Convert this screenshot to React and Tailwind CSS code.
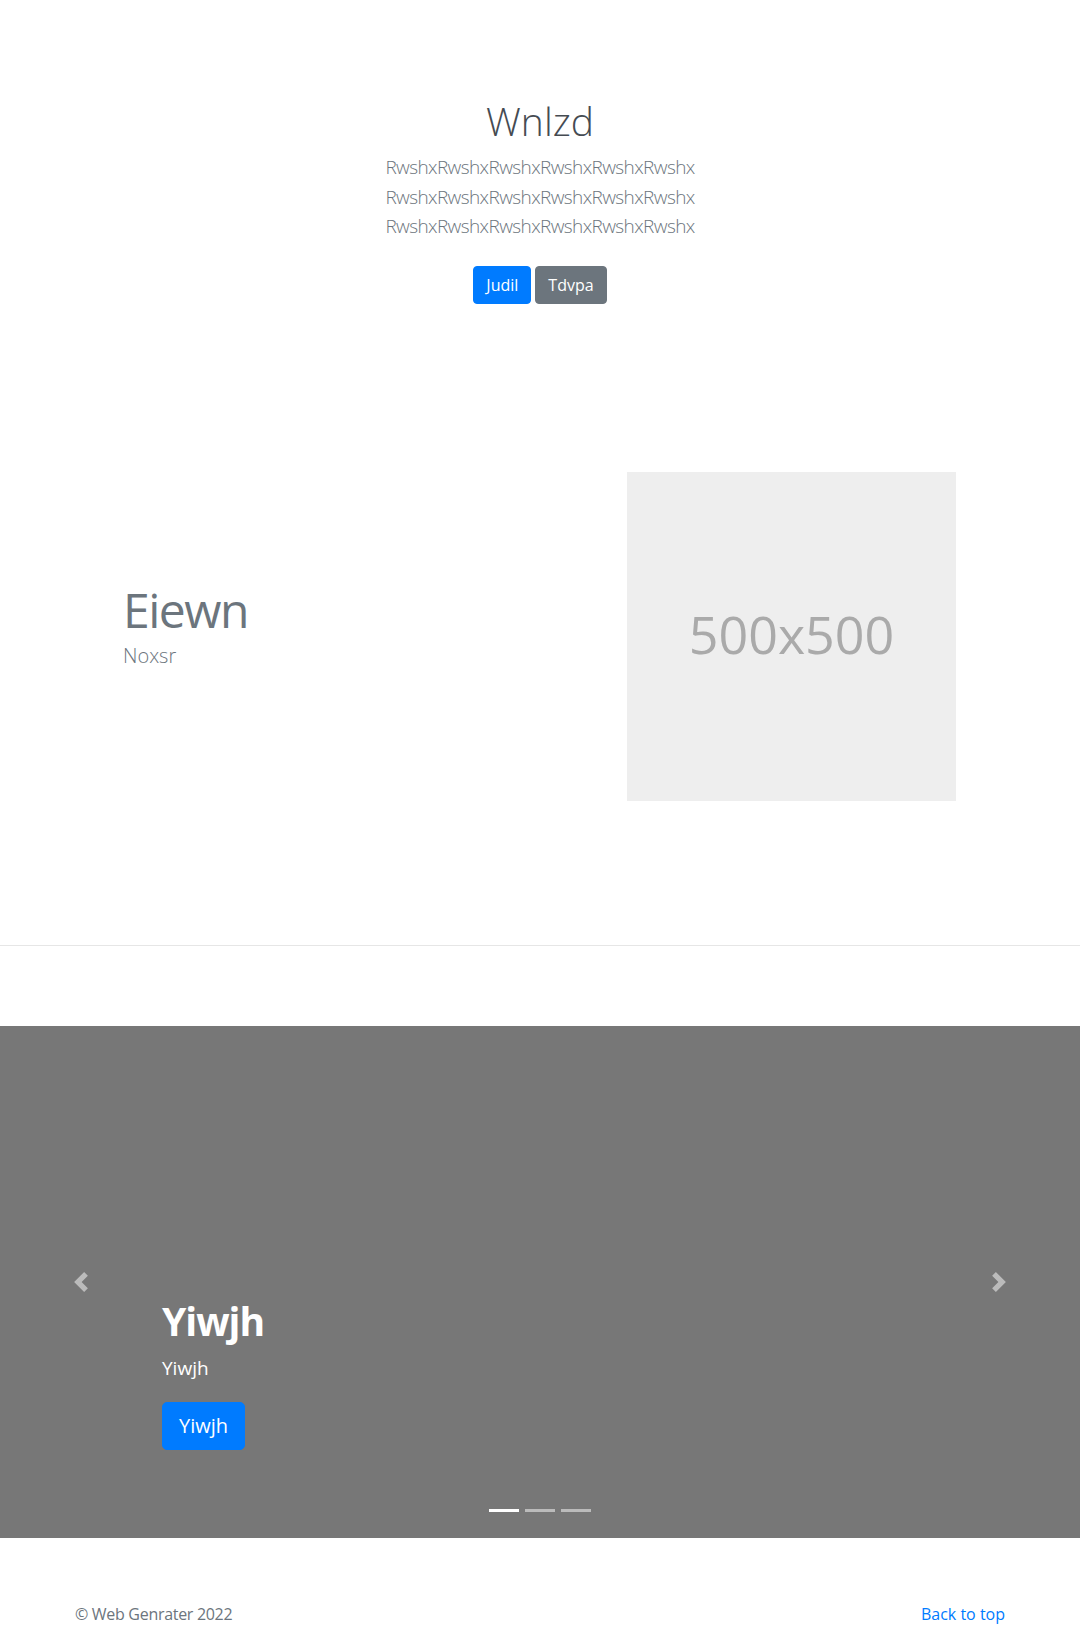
import React from 'react';

const font = "font-['Open_Sans','Noto_Sans',sans-serif]";

const Hero = () => (
    <section className="text-center pt-[97px]">
        <h1 className="text-[39px] leading-[48px] font-light text-[#454b52] mb-[8px]">Wnlzd</h1>
        <p className="text-[19px] leading-[29.5px] font-light tracking-[-0.6px] text-[#6c757d] mb-[24.5px]">
            RwshxRwshxRwshxRwshxRwshxRwshx
            <br />
            RwshxRwshxRwshxRwshxRwshxRwshx
            <br />
            RwshxRwshxRwshxRwshxRwshxRwshx
        </p>
        <div className="flex justify-center gap-[4px]">
            <a href="#" className="inline-block h-[38px] px-3 leading-[36px] text-[16px] text-white bg-[#007bff] border border-[#007bff] rounded-[4px]">
                Judil
            </a>
            <a href="#" className="inline-block h-[38px] px-3 leading-[36px] text-[16px] text-white bg-[#6c757d] border border-[#6c757d] rounded-[4px]">
                Tdvpa
            </a>
        </div>
    </section>
);

const Feature = () => (
    <section className="w-[960px] mx-auto px-[15px] pt-[168px] pb-[144px] flex">
        {/* Text Column */}
        <div className="w-[552px] pt-[107px] pl-[48px]">
            <h2 className="text-[48px] leading-[62px] font-normal tracking-[-1.5px] text-[#6c757d]">Eiewn</h2>
            <p className="text-[20px] leading-[30px] font-light text-[#6c757d]">Noxsr</p>
        </div>

        {/* Placeholder Image */}
        <div className="w-[329px] h-[329px] bg-[#eeeeee] flex items-center justify-center pb-[6px]">
            <span className="text-[52px] text-[#aaaaaa]">500x500</span>
        </div>
    </section>
);

const Chevron = ({ dir }) => (
    <svg xmlns="http://www.w3.org/2000/svg" className="w-5 h-5" viewBox="0 0 8 8" fill="#fff">
        {dir === 'prev' ? (
            <path d="M5.25 0l-4 4 4 4 1.5-1.5-2.5-2.5 2.5-2.5-1.5-1.5z" />
        ) : (
            <path d="M2.75 0l-1.5 1.5 2.5 2.5-2.5 2.5 1.5 1.5 4-4-4-4z" />
        )}
    </svg>
);

const Carousel = () => (
    <div className="relative h-[512px] bg-[#777777] flex flex-col justify-end px-[162px] pb-[88px]">
        {/* Caption */}
        <div className="text-white">
            <h1 className="text-[39px] leading-[48px] font-bold tracking-[-1px] mb-[8px]">Yiwjh</h1>
            <p className="text-[19px] leading-[30px] mb-[19px]">Yiwjh</p>
            <a href="#" className="inline-block h-[48px] px-4 leading-[46px] text-[20px] text-white bg-[#007bff] border border-[#007bff] rounded-[5px]">
                Yiwjh
            </a>
        </div>

        {/* Controls */}
        <a href="#" className="absolute left-0 top-0 bottom-0 w-[15%] flex items-center justify-center opacity-50">
            <Chevron dir="prev" />
        </a>
        <a href="#" className="absolute right-0 top-0 bottom-0 w-[15%] flex items-center justify-center opacity-50">
            <Chevron dir="next" />
        </a>

        {/* Indicators */}
        <div className="absolute left-0 right-0 top-[483px] flex justify-center gap-[6px]">
            <span className="block w-[30px] h-[3px] bg-white" />
            <span className="block w-[30px] h-[3px] bg-white opacity-50" />
            <span className="block w-[30px] h-[3px] bg-white opacity-50" />
        </div>
    </div>
);

const Footer = () => (
    <footer className="pt-[64px] pb-[48px]">
        <div className="w-[960px] mx-auto px-[15px] flex justify-between text-[16px] leading-[24px]">
            <p className="text-[#6c757d] tracking-[-0.3px]">© Web Genrater 2022</p>
            <a href="#" className="text-[#007bff]">Back to top</a>
        </div>
    </footer>
);

const App = () => {
    return (
        <div className={`${font} bg-white min-h-screen`}>
            <Hero />
            <Feature />
            <hr className="border-0 border-t border-[#e6e6e6]" />
            <div className="h-[80px]" />
            <Carousel />
            <Footer />
        </div>
    );
};

export default App;
